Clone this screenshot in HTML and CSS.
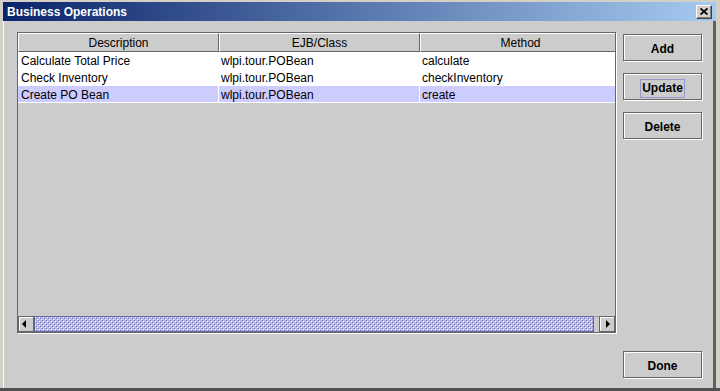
FILE: index.html
```html
<!DOCTYPE html>
<html lang="en">
<head>
    <meta charset="UTF-8">
    <meta name="viewport" content="width=device-width, initial-scale=1.0">
    <title>Business Operations</title>
    <link rel="stylesheet" href="styles.css">
</head>
<body>
    <div class="window">
        <div class="titlebar">
            <span class="title">Business Operations</span>
            <button class="close" type="button">
                <svg width="8" height="7" viewBox="0 0 8 7">
                    <path d="M0.5 0.5 L7.5 6.5 M7.5 0.5 L0.5 6.5" stroke="#000" stroke-width="1.8"/>
                </svg>
            </button>
        </div>
        <div class="content">
            <div class="table-pane">
                <div class="table-view">
                    <div class="thead">
                        <div class="th">Description</div>
                        <div class="th">EJB/Class</div>
                        <div class="th">Method</div>
                    </div>
                    <div class="tr">
                        <div class="td">Calculate Total Price</div>
                        <div class="td">wlpi.tour.POBean</div>
                        <div class="td">calculate</div>
                    </div>
                    <div class="tr">
                        <div class="td">Check Inventory</div>
                        <div class="td">wlpi.tour.POBean</div>
                        <div class="td">checkInventory</div>
                    </div>
                    <div class="tr selected">
                        <div class="td">Create PO Bean</div>
                        <div class="td">wlpi.tour.POBean</div>
                        <div class="td">create</div>
                    </div>
                </div>
                <div class="hscroll">
                    <div class="arrow">
                        <svg width="14" height="14" viewBox="0 0 14 14"><polygon points="7,3 3,7 7,11" fill="#000"/></svg>
                    </div>
                    <div class="thumb">
                        <svg width="100%" height="100%">
                            <defs>
                                <pattern id="bumps" width="4" height="4" patternUnits="userSpaceOnUse">
                                    <rect width="4" height="4" fill="#b8b8e8"/>
                                    <rect x="0" y="0" width="1" height="1" fill="#ffffff"/>
                                    <rect x="2" y="2" width="1" height="1" fill="#ffffff"/>
                                    <rect x="1" y="1" width="1" height="1" fill="#7777b0"/>
                                    <rect x="3" y="3" width="1" height="1" fill="#7777b0"/>
                                </pattern>
                            </defs>
                            <rect width="100%" height="100%" fill="url(#bumps)"/>
                        </svg>
                    </div>
                    <div class="track"></div>
                    <div class="arrow">
                        <svg width="14" height="14" viewBox="0 0 14 14"><polygon points="6,3 10,7 6,11" fill="#000"/></svg>
                    </div>
                </div>
            </div>
            <div class="actions">
                <button class="btn" type="button">Add</button>
                <button class="btn" type="button"><span class="focus">Update</span></button>
                <button class="btn" type="button">Delete</button>
                <button class="btn done" type="button">Done</button>
            </div>
        </div>
    </div>
</body>
</html>
```
FILE: styles.css
```css
* {
    box-sizing: border-box;
}
body {
    margin: 0;
    font-family: "Liberation Sans", Arial, sans-serif;
    font-size: 12px;
    color: #000;
}
.window {
    width: 720px;
    height: 391px;
    background-color: #d4d0c8;
    padding: 2px 4px 0 3px;
    border-bottom: 3px solid #505050;
}
.titlebar {
    display: flex;
    align-items: center;
    justify-content: space-between;
    height: 19px;
    padding: 0 4px 0 4px;
    background: linear-gradient(to right, #0a246a, #a6caf0);
}
.title {
    color: #fff;
    font-weight: bold;
    line-height: 19px;
    padding-top: 1px;
}
.close {
    width: 16px;
    height: 14px;
    padding: 0;
    margin: 0;
    display: flex;
    align-items: center;
    justify-content: center;
    background-color: #d4d0c8;
    border: 1px solid;
    border-color: #fff #404040 #404040 #fff;
    box-shadow: inset -1px -1px 0 #808080;
}
.content {
    display: flex;
    align-items: flex-start;
    height: 367px;
    padding: 11px 11px 10px 13px;
    background-color: #cccccc;
    border-left: 1px solid #fff;
    border-right: 3px solid #606060;
}
.table-pane {
    display: flex;
    flex-direction: column;
    width: 599px;
    height: 301px;
    border: 1px solid #666;
    box-shadow: 1px 1px 0 #fff;
}
.table-view {
    flex: 1;
    overflow: hidden;
    background-color: #cccccc;
}
.thead {
    display: flex;
    height: 19px;
}
.th {
    flex: none;
    width: 201px;
    height: 19px;
    padding-top: 2px;
    line-height: 15px;
    text-align: center;
    border-top: 1px solid #fff;
    border-left: 1px solid #fff;
    border-right: 1px solid #666;
    border-bottom: 1px solid #666;
}
.tr {
    display: flex;
    height: 17px;
    background-color: #fff;
}
.tr.selected {
    background-color: #ccccff;
}
.td {
    flex: none;
    width: 201px;
    height: 17px;
    padding: 2px 0 0 2px;
    line-height: 14px;
    white-space: nowrap;
    border-right: 1px solid #fff;
    border-bottom: 1px solid #fff;
}
.tr .td:first-child {
    padding-left: 3px;
}
.hscroll {
    display: flex;
    height: 16px;
    background-color: #cccccc;
}
.arrow {
    flex: none;
    width: 16px;
    height: 16px;
    border: 1px solid #666;
    box-shadow: inset 1px 1px 0 #fff;
    background-color: #cccccc;
}
.arrow svg {
    display: block;
}
.thumb {
    flex: none;
    width: 560px;
    height: 16px;
    border: 1px solid #666699;
    box-shadow: inset 1px 1px 0 #ccccff;
}
.thumb svg {
    display: block;
}
.track {
    flex: 1;
    border-top: 1px solid #999;
}
.actions {
    display: flex;
    flex-direction: column;
    gap: 12px;
    align-self: stretch;
    width: 79px;
    margin-left: 7px;
    padding-top: 2px;
}
.btn {
    width: 79px;
    height: 27px;
    margin: 0;
    padding: 2px 0 0 0;
    font-family: "Liberation Sans", Arial, sans-serif;
    font-size: 12px;
    font-weight: bold;
    color: #000;
    background-color: #cccccc;
    border: 1px solid #666;
    box-shadow: inset 1px 1px 0 #fff, 1px 1px 0 #fff;
    line-height: 22px;
}
.focus {
    display: inline-block;
    padding: 0 1px;
    line-height: 17px;
    border: 1px solid #9999cc;
}
.done {
    margin-top: auto;
}
```
